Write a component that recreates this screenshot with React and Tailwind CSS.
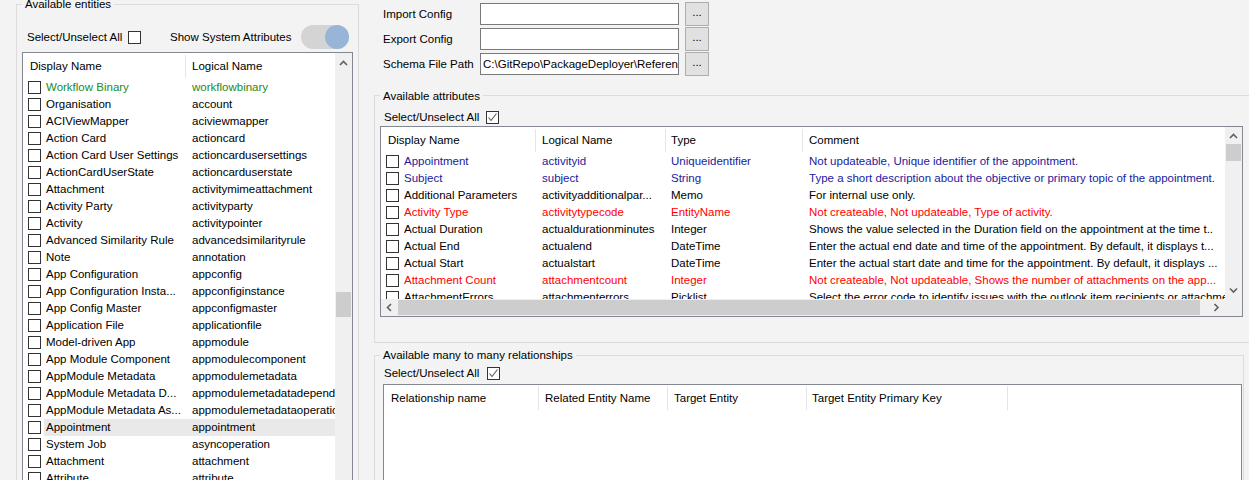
import React from "react";

function Box({ checked }) {
  return (
    <svg width="13" height="13" viewBox="0 0 13 13" className="shrink-0 block">
      <rect x="0.5" y="0.5" width="12" height="12" fill="#fff" stroke="#333" />
      {checked && (
        <polyline points="2.5,6.5 5,9.5 10.5,2.5" fill="none" stroke="#555" strokeWidth="1.1" />
      )}
    </svg>
  );
}

function Chev({ dir }) {
  const pts = {
    up: "1,6 4.5,2.5 8,6",
    down: "1,2.5 4.5,6 8,2.5",
    left: "6,1 2.5,4.5 6,8",
    right: "2.5,1 6,4.5 2.5,8",
  }[dir];
  return (
    <svg width="9" height="9" viewBox="0 0 9 9" className="block">
      <polyline points={pts} fill="none" stroke="#606060" strokeWidth="1.6" />
    </svg>
  );
}

const entities = [
  ["Workflow Binary", "workflowbinary", "g"],
  ["Organisation", "account"],
  ["ACIViewMapper", "aciviewmapper"],
  ["Action Card", "actioncard"],
  ["Action Card User Settings", "actioncardusersettings"],
  ["ActionCardUserState", "actioncarduserstate"],
  ["Attachment", "activitymimeattachment"],
  ["Activity Party", "activityparty"],
  ["Activity", "activitypointer"],
  ["Advanced Similarity Rule", "advancedsimilarityrule"],
  ["Note", "annotation"],
  ["App Configuration", "appconfig"],
  ["App Configuration Insta...", "appconfiginstance"],
  ["App Config Master", "appconfigmaster"],
  ["Application File", "applicationfile"],
  ["Model-driven App", "appmodule"],
  ["App Module Component", "appmodulecomponent"],
  ["AppModule Metadata", "appmodulemetadata"],
  ["AppModule Metadata D...", "appmodulemetadatadependency"],
  ["AppModule Metadata As...", "appmodulemetadataoperation"],
  ["Appointment", "appointment", "sel"],
  ["System Job", "asyncoperation"],
  ["Attachment", "attachment"],
  ["Attribute", "attribute"],
];

const attrs = [
  ["Appointment", "activityid", "Uniqueidentifier", "Not updateable, Unique identifier of the appointment.", "b"],
  ["Subject", "subject", "String", "Type a short description about the objective or primary topic of the appointment.", "b"],
  ["Additional Parameters", "activityadditionalpar...", "Memo", "For internal use only.", "k"],
  ["Activity Type", "activitytypecode", "EntityName", "Not createable, Not updateable, Type of activity.", "r"],
  ["Actual Duration", "actualdurationminutes", "Integer", "Shows the value selected in the Duration field on the appointment at the time t..", "k"],
  ["Actual End", "actualend", "DateTime", "Enter the actual end date and time of the appointment. By default, it displays t...", "k"],
  ["Actual Start", "actualstart", "DateTime", "Enter the actual start date and time for the appointment. By default, it displays ...", "k"],
  ["Attachment Count", "attachmentcount", "Integer", "Not createable, Not updateable, Shows the number of attachments on the app...", "r"],
  ["AttachmentErrors", "attachmenterrors", "Picklist", "Select the error code to identify issues with the outlook item recipients or attachments.", "k"],
];

const colorCls = {
  b: "text-[#1a1a9e]",
  r: "text-[#ff0000]",
  k: "text-black",
};

function ConfigRow({ label, value }) {
  return (
    <div className="flex items-center h-[24px] pl-[9px]">
      <span className="w-[97px] whitespace-nowrap pt-[1px]">{label}</span>
      <div className="w-[199px] h-[22px] border border-[#7a7a7a] bg-white overflow-hidden whitespace-nowrap pl-[2px] leading-[20px]">
        {value}
      </div>
      <div className="ml-[6px] w-[24px] h-[24px] bg-[#e1e1e1] border border-[#adadad] flex items-center justify-center leading-none pb-[2px]">
        ...
      </div>
    </div>
  );
}

export default function App() {
  return (
    <div className="w-[1249px] h-[480px] overflow-hidden bg-[#f3f3f3] flex items-start text-[11.5px] text-black font-['Liberation_Sans',Arial,sans-serif]">
      {/* Left groupbox */}
      <div className="ml-[16px] mt-[4px] w-[343px] h-[520px] shrink-0 border border-[#dcdcdc] relative">
        <span className="absolute left-[5px] -top-[8px] px-[3px] bg-[#f3f3f3] leading-[15px] whitespace-nowrap">
          Available entities
        </span>
        <div className="mt-[20px] h-[24px] flex items-center pl-[10px]">
          <span className="w-[101px] whitespace-nowrap pt-[1px]">Select/Unselect All</span>
          <Box />
          <span className="ml-[29px] w-[131px] whitespace-nowrap pt-[1px]">Show System Attributes</span>
          <div className="w-[48px] h-[24px] rounded-full bg-[#d4d4d4] flex justify-end">
            <div className="w-[24px] h-[24px] rounded-full bg-[#98b5d8]" />
          </div>
        </div>
        <div className="ml-[5px] mt-[3px] w-[331px] h-[440px] border border-[#828790] bg-white flex">
          <div className="w-[312px] overflow-hidden">
            <div className="h-[26px] flex items-center">
              <div className="w-[162px] pl-[7px] pt-[2px] whitespace-nowrap">Display Name</div>
              <div className="w-px h-[23px] bg-[#e5e5e5]" />
              <div className="pl-[6px] pt-[2px] whitespace-nowrap">Logical Name</div>
            </div>
            {entities.map(([d, l, f], i) => (
              <div key={i} className="h-[17px] flex items-center pl-[5px]">
                <Box />
                <div className={`ml-[3px] flex-1 h-[17px] flex items-center overflow-hidden ${f === "sel" ? "bg-[#e9e9e9]" : ""}`}>
                  <span className={`w-[148px] shrink-0 pl-[2px] whitespace-nowrap overflow-hidden ${f === "g" ? "text-[#228b22]" : ""}`}>{d}</span>
                  <span className={`whitespace-nowrap ${f === "g" ? "text-[#228b22]" : ""}`}>{l}</span>
                </div>
              </div>
            ))}
          </div>
          <div className="w-[17px] bg-[#f0f0f0] flex flex-col items-center">
            <div className="h-[17px] w-[17px] flex items-center justify-center pt-[3px]">
              <Chev dir="up" />
            </div>
            <div className="h-[222px]" />
            <div className="h-[25px] w-[15px] bg-[#cdcdcd]" />
          </div>
        </div>
      </div>

      {/* Right column */}
      <div className="ml-[15px] w-[900px] shrink-0 flex flex-col">
        <div className="mt-[2px] flex flex-col gap-[1px]">
          <ConfigRow label="Import Config" value="" />
          <ConfigRow label="Export Config" value="" />
          <ConfigRow label="Schema File Path" value="C:\GitRepo\PackageDeployer\ReferenceData\schema.xml" />
        </div>

        {/* Available attributes */}
        <div className="mt-[19px] w-[900px] h-[248px] border border-[#dcdcdc] relative">
          <span className="absolute left-[5px] -top-[7px] px-[3px] bg-[#f3f3f3] leading-[15px] whitespace-nowrap">
            Available attributes
          </span>
          <div className="mt-[13px] h-[16px] flex items-center pl-[9px]">
            <span className="w-[102px] whitespace-nowrap pt-[1px]">Select/Unselect All</span>
            <Box checked />
          </div>
          <div className="ml-[5px] mt-[1px] w-[863px] h-[191px] border border-[#828790] bg-white flex flex-col">
            <div className="h-[172px] flex">
              <div className="flex-1 overflow-hidden">
                <div className="h-[26px] flex items-center">
                  <div className="w-[154px] pl-[7px] pt-[1px] whitespace-nowrap">Display Name</div>
                  <div className="w-px h-[23px] bg-[#e5e5e5]" />
                  <div className="w-[129px] pl-[6px] pt-[1px] whitespace-nowrap">Logical Name</div>
                  <div className="w-px h-[23px] bg-[#e5e5e5]" />
                  <div className="w-[136px] pl-[5px] pt-[1px] whitespace-nowrap">Type</div>
                  <div className="w-px h-[23px] bg-[#e5e5e5]" />
                  <div className="pl-[6px] pt-[1px] whitespace-nowrap">Comment</div>
                </div>
                {attrs.map(([d, l, t, c, col], i) => (
                  <div key={i} className={`h-[17px] flex items-center pl-[5px] ${colorCls[col]}`}>
                    <Box />
                    <span className="ml-[5px] w-[138px] shrink-0 whitespace-nowrap overflow-hidden">{d}</span>
                    <span className="w-[129px] shrink-0 whitespace-nowrap overflow-hidden">{l}</span>
                    <span className="w-[138px] shrink-0 whitespace-nowrap overflow-hidden">{t}</span>
                    <span className="whitespace-nowrap">{c}</span>
                  </div>
                ))}
              </div>
              <div className="w-[17px] bg-[#f0f0f0] flex flex-col items-center">
                <div className="h-[17px] w-[17px] flex items-center justify-center pt-[2px]">
                  <Chev dir="up" />
                </div>
                <div className="h-[17px] w-[15px] bg-[#cdcdcd]" />
                <div className="flex-1" />
                <div className="h-[17px] w-[17px] flex items-center justify-center">
                  <Chev dir="down" />
                </div>
              </div>
            </div>
            <div className="h-[17px] flex bg-[#f0f0f0]">
              <div className="w-[17px] flex items-center justify-center">
                <Chev dir="left" />
              </div>
              <div className="w-[802px] h-[15px] my-[1px] bg-[#cdcdcd]" />
              <div className="flex-1" />
              <div className="w-[17px] flex items-center justify-center">
                <Chev dir="right" />
              </div>
              <div className="w-[17px]" />
            </div>
          </div>
        </div>

        {/* Many to many */}
        <div className="mt-[12px] w-[870px] h-[200px] border border-[#dcdcdc] relative">
          <span className="absolute left-[5px] -top-[8px] px-[3px] bg-[#f3f3f3] leading-[15px] whitespace-nowrap">
            Available many to many relationships
          </span>
          <div className="mt-[9px] h-[16px] flex items-center pl-[9px]">
            <span className="w-[103px] whitespace-nowrap pt-[1px]">Select/Unselect All</span>
            <Box checked />
          </div>
          <div className="ml-[8px] mt-[3px] w-[859px] h-[160px] border border-[#828790] bg-white">
            <div className="h-[26px] flex items-center">
              <div className="w-[154px] pl-[7px] pt-[1px] whitespace-nowrap">Relationship name</div>
              <div className="w-px h-[24px] bg-[#e5e5e5]" />
              <div className="w-[128px] pl-[6px] pt-[1px] whitespace-nowrap">Related Entity Name</div>
              <div className="w-px h-[24px] bg-[#e5e5e5]" />
              <div className="w-[138px] pl-[6px] pt-[1px] whitespace-nowrap">Target Entity</div>
              <div className="w-px h-[24px] bg-[#e5e5e5]" />
              <div className="w-[200px] pl-[5px] pt-[1px] whitespace-nowrap">Target Entity Primary Key</div>
              <div className="w-px h-[24px] bg-[#e5e5e5]" />
            </div>
          </div>
        </div>
      </div>
    </div>
  );
}
